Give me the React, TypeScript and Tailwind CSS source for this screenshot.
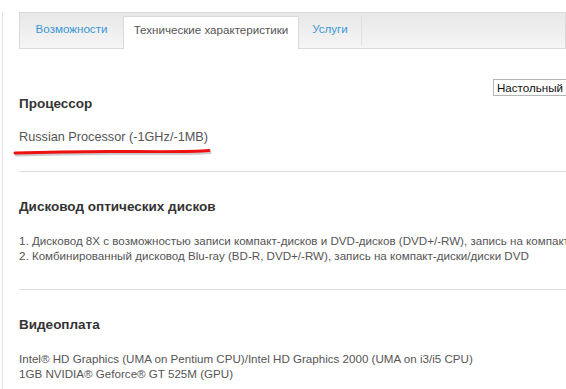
import React from 'react';

const font = { fontFamily: '"Liberation Sans", Arial, sans-serif' };

const tabs = [
  { label: 'Возможности', w: 'w-[103px]', active: false },
  { label: 'Технические характеристики', w: 'w-[176px]', active: true },
  { label: 'Услуги', w: 'w-[62px]', active: false },
];

const Section: React.FC<{ title: string; lines: string[]; first?: boolean; big?: boolean; children?: React.ReactNode }> = ({ title, lines, first, big, children }) => (
  <div className={`relative border-b border-[#dedede] pb-[26px] ${first ? 'pt-0' : 'pt-[25px]'}`}>
    <h3 className="h-[20px] text-[13.5px] font-bold leading-[20px] text-[#333]">{title}</h3>
    <div className={`mt-4 leading-[15px] text-[#555] whitespace-nowrap ${big ? 'text-[12.7px]' : 'text-[11.6px]'}`}>
      {lines.map((l, i) => (
        <div key={i}>{l}</div>
      ))}
    </div>
    {children}
  </div>
);

export default function App() {
  return (
    <div className="h-[389px] w-[566px] overflow-hidden bg-white" style={font}>
      <div className="ml-[2px] h-full border-l border-[#e2e2e2] pl-4">
        {/* tabs */}
        <div className="mt-3 flex h-[37px] items-stretch border border-[#dadada] bg-gradient-to-b from-[#e8e8e8] to-[#f5f5f5] text-[11.6px]">
          {tabs.map((t) =>
            t.active ? (
              <div
                key={t.label}
                className={`${t.w} mt-[3px] -mb-px flex items-center justify-center border-x border-t border-[#dadada] bg-white pb-[6px] text-[#555]`}
              >
                {t.label}
              </div>
            ) : (
              <div key={t.label} className={`${t.w} flex items-center justify-center pb-[3px] text-[#3b97d3]`}>
                {t.label}
              </div>
            )
          )}
          <div className="my-[3px] w-px bg-[#e0e0e0]" />
        </div>

        {/* select */}
        <div className="mt-[30px] flex justify-end">
          <div className="-mr-[22px] flex h-[17px] w-[95px] items-center border border-[#b5b5b5] bg-white pl-[3px] text-[11.6px] text-[#111]">
            Настольный
          </div>
        </div>

        <div className="-mt-[2px]">
          <Section title="Процессор" lines={['Russian Processor (-1GHz/-1MB)']} first big>
            <svg className="absolute left-[-6px] top-[55px]" width="204" height="10" viewBox="0 0 204 10">
              <path d="M2 4 Q60 2 120 2.5 T196 1.5" stroke="#9a9a9a" strokeWidth="3" fill="none" strokeLinecap="round" opacity="0.5" transform="translate(1 2)" />
              <path d="M2 4 Q60 2 120 2.5 T196 1.5" stroke="#ee1111" strokeWidth="3" fill="none" strokeLinecap="round" />
            </svg>
          </Section>
          <Section
            title="Дисковод оптических дисков"
            lines={[
              '1. Дисковод 8X с возможностью записи компакт-дисков и DVD-дисков (DVD+/-RW), запись на компакт-диски/диски DVD',
              '2. Комбинированный дисковод Blu-ray (BD-R, DVD+/-RW), запись на компакт-диски/диски DVD',
            ]}
          />
          <Section
            title="Видеоплата"
            lines={[
              'Intel® HD Graphics (UMA on Pentium CPU)/Intel HD Graphics 2000 (UMA on i3/i5 CPU)',
              '1GB NVIDIA® Geforce® GT 525M (GPU)',
            ]}
          />
        </div>
      </div>
    </div>
  );
}
